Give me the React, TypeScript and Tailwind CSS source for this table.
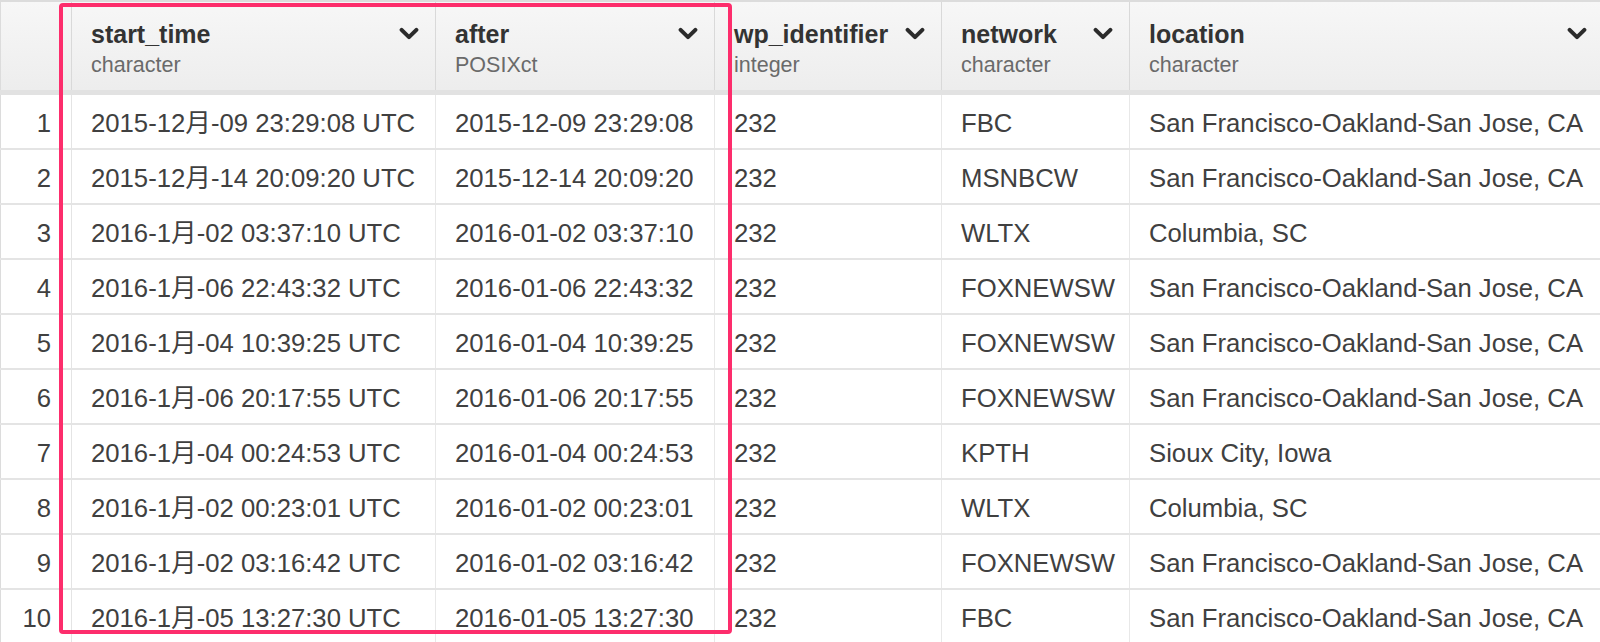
import React from "react";

const cols = [
  { key: "start_time", type: "character", w: "w-[364px]" },
  { key: "after", type: "POSIXct", w: "w-[279px]" },
  { key: "wp_identifier", type: "integer", w: "w-[227px]" },
  { key: "network", type: "character", w: "w-[188px]" },
  { key: "location", type: "character", w: "w-[474px]" },
];

const rows: string[][] = [
  ["2015-12月-09 23:29:08 UTC", "2015-12-09 23:29:08", "232", "FBC", "San Francisco-Oakland-San Jose, CA"],
  ["2015-12月-14 20:09:20 UTC", "2015-12-14 20:09:20", "232", "MSNBCW", "San Francisco-Oakland-San Jose, CA"],
  ["2016-1月-02 03:37:10 UTC", "2016-01-02 03:37:10", "232", "WLTX", "Columbia, SC"],
  ["2016-1月-06 22:43:32 UTC", "2016-01-06 22:43:32", "232", "FOXNEWSW", "San Francisco-Oakland-San Jose, CA"],
  ["2016-1月-04 10:39:25 UTC", "2016-01-04 10:39:25", "232", "FOXNEWSW", "San Francisco-Oakland-San Jose, CA"],
  ["2016-1月-06 20:17:55 UTC", "2016-01-06 20:17:55", "232", "FOXNEWSW", "San Francisco-Oakland-San Jose, CA"],
  ["2016-1月-04 00:24:53 UTC", "2016-01-04 00:24:53", "232", "KPTH", "Sioux City, Iowa"],
  ["2016-1月-02 00:23:01 UTC", "2016-01-02 00:23:01", "232", "WLTX", "Columbia, SC"],
  ["2016-1月-02 03:16:42 UTC", "2016-01-02 03:16:42", "232", "FOXNEWSW", "San Francisco-Oakland-San Jose, CA"],
  ["2016-1月-05 13:27:30 UTC", "2016-01-05 13:27:30", "232", "FBC", "San Francisco-Oakland-San Jose, CA"],
];

function Chevron() {
  return (
    <svg width="20" height="14" viewBox="0 0 20 14" className="shrink-0">
      <path d="M2.6 2.8 L10 10.2 L17.4 2.8" fill="none" stroke="#2b2b2b" strokeWidth="4" strokeLinecap="round" strokeLinejoin="round" />
    </svg>
  );
}

export default function App() {
  return (
    <div
      className="relative w-[1600px] h-[642px] overflow-hidden bg-white text-[#404040]"
      style={{ fontFamily: '"Liberation Sans", Arial, "Noto Sans CJK JP", sans-serif' }}
    >
      <div className="w-[1610px]">
        {/* header */}
        <div className="flex h-[95px] border-t-2 border-t-[#dcdcdc] border-b-[5px] border-b-[#e2e2e2] bg-gradient-to-b from-[#f7f7f7] to-[#ededed]">
          <div className="w-[72px] shrink-0 border-l border-l-[#dcdcdc] border-r border-r-[#d9d9d9]" />
          {cols.map((c) => (
            <div key={c.key} className={`${c.w} shrink-0 border-r border-r-[#d9d9d9] pl-[19px] pr-[16px] pt-[17px]`}>
              <div className="flex items-center justify-between">
                <span className="text-[25px] leading-[30px] font-bold text-[#333]">{c.key}</span>
                <Chevron />
              </div>
              <div className="mt-[3px] text-[21.5px] leading-[26px] text-[#6a6a6a]">{c.type}</div>
            </div>
          ))}
        </div>
        {/* rows */}
        {rows.map((r, i) => (
          <div key={i} className="flex h-[55px] border-b-2 border-b-[#e4e4e4] bg-white">
            <div className="w-[72px] shrink-0 border-l border-l-[#dcdcdc] border-r border-r-[#e4e4e4] flex items-center justify-end pr-[20px] pt-[3px] text-[25.7px]">
              {i + 1}
            </div>
            {cols.map((c, j) => (
              <div
                key={c.key}
                className={`${c.w} shrink-0 border-r border-r-[#e8e8e8] pl-[19px] flex items-center pt-[3px] text-[25.7px] whitespace-nowrap overflow-hidden`}
              >
                {r[j]}
              </div>
            ))}
          </div>
        ))}
      </div>
      {/* highlight overlay */}
      <div className="absolute left-[59px] top-[3px] w-[673px] h-[631px] border-[4px] border-[#fd2d6c] rounded-[4px] pointer-events-none" />
    </div>
  );
}
